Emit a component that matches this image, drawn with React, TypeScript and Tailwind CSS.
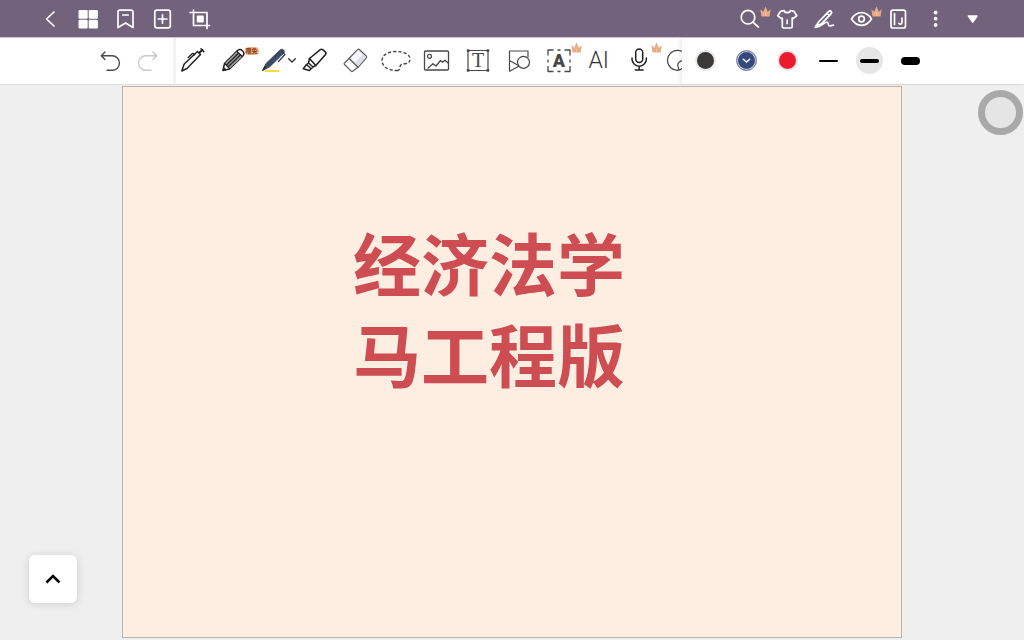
import type { ReactNode } from "react";
import clsx from "clsx";

function Icon({ children, className }: { children: ReactNode; className?: string }) {
  return (
    <svg
      viewBox="0 0 28 28"
      className={clsx("h-7 w-7 shrink-0", className)}
      fill="none"
      stroke="currentColor"
      strokeWidth="1.700"
      strokeLinecap="round"
      strokeLinejoin="round"
      aria-hidden="true"
    >
      {children}
    </svg>
  );
}

function Crown({ className }: { className?: string }) {
  return (
    <svg viewBox="0 0 11 11" className={clsx("absolute h-[11px] w-[11px]", className)} aria-hidden="true">
      <path d="M.3 3.200 3.200 5.800 5.500.4l2.300 5.400 2.900-2.600-1.200 7.200h-8z" fill="#e8ab86" />
      <path d="M5.500 2 6 9.800H5z" fill="#f3c8a8" />
    </svg>
  );
}

function NavButton({ label, children }: { label: string; children: ReactNode }) {
  return (
    <button type="button" aria-label={label} className="relative flex h-full w-[37px] items-center justify-center">
      {children}
    </button>
  );
}

function ToolButton({ label, children }: { label: string; children: ReactNode }) {
  return (
    <button type="button" aria-label={label} className="relative flex h-full items-center justify-center">
      {children}
    </button>
  );
}

function Header() {
  return (
    <header className="flex h-[38px] items-center justify-between border-b border-[#cfc3d6] bg-[#73627c] pr-[33px] pl-8 text-white">
      <nav className="flex h-full">
        <NavButton label="返回">
          <Icon>
            <path d="M17 7 9.500 14 17 21" />
          </Icon>
        </NavButton>
        <NavButton label="缩略图">
          <Icon>
            <g fill="currentColor" stroke="none">
              <rect x="4.500" y="5" width="9.200" height="8.700" rx="1.200" />
              <rect x="14.700" y="5" width="9.200" height="8.700" rx="1.200" />
              <rect x="4.500" y="14.700" width="9.200" height="8.700" rx="1.200" />
              <rect x="14.700" y="14.700" width="9.200" height="8.700" rx="1.200" />
            </g>
          </Icon>
        </NavButton>
        <NavButton label="书签">
          <Icon>
            <path d="M7 22.500V7a1.800 1.800 0 0 1 1.800-1.800H20.200A1.800 1.800 0 0 1 22 7V22.500L14.500 18z" />
            <path d="M11.800 10h5.400" />
          </Icon>
        </NavButton>
        <NavButton label="添加页面">
          <Icon>
            <rect x="6.800" y="5.200" width="15.500" height="17.600" rx="2" />
            <path d="M10.300 14h8.500M14.500 9.800v8.400" />
          </Icon>
        </NavButton>
        <NavButton label="裁剪">
          <Icon>
            <path d="M5 7.500H22v16M8.500 5v15.500H24.500" />
            <rect x="11.800" y="10.600" width="7" height="7" rx=".8" fill="currentColor" stroke="none" />
          </Icon>
        </NavButton>
      </nav>
      <nav className="flex h-full">
        <NavButton label="搜索">
          <Icon>
            <circle cx="11" cy="12.200" r="6.800" />
            <path d="m16 17.200 5.300 4.800" />
          </Icon>
          <Crown className="top-[6px] right-[-2px]" />
        </NavButton>
        <NavButton label="主题">
          <Icon>
            <path d="M10 5.500c.5 2.800 6 2.800 6.500 0l3.400.8 2.900 4.500-3.800 2.800-.8-.6v8.500a1.500 1.500 0 0 1-1.500 1.500H9.800A1.500 1.500 0 0 1 8.300 21.500V13l-.8.6L3.700 10.800l2.900-4.500z" />
            <path d="M13.200 15v3.500" />
          </Icon>
        </NavButton>
        <NavButton label="手写">
          <Icon>
            <path d="M8 16.500 17.800 6.400a1.600 1.600 0 0 1 2.400 2.200L10.400 18.900 5 20.800z" />
            <path d="m16 8.300 2.300 2.200M4 22.300c6-.2 9.500-5.300 12-5.300 2 0 .5 4 2.500 4 1.500 0 2.300-.8 4-.8" />
          </Icon>
        </NavButton>
        <NavButton label="阅读模式">
          <Icon>
            <path d="M3.500 14C6 10 9.500 7.700 13.500 7.700S21 10 23.500 14c-2.500 4-6 6.300-10 6.300S6 18 3.500 14z" />
            <circle cx="13.500" cy="14" r="2.800" />
          </Icon>
          <Crown className="top-[6px] right-[-2px]" />
        </NavButton>
        <NavButton label="文档">
          <Icon>
            <rect x="6" y="5.200" width="14.500" height="17.800" rx="2" />
            <path d="M9.500 8.500v11M17 13v4.500a1.600 1.600 0 0 1-3 .8" />
          </Icon>
        </NavButton>
        <NavButton label="更多">
          <Icon>
            <g fill="currentColor" stroke="none">
              <circle cx="13.600" cy="7.500" r="1.900" />
              <circle cx="13.600" cy="13.700" r="1.900" />
              <circle cx="13.600" cy="20" r="1.900" />
            </g>
          </Icon>
        </NavButton>
        <NavButton label="收起">
          <Icon>
            <path d="M9.500 11h8.400L13.700 17z" fill="currentColor" />
          </Icon>
        </NavButton>
      </nav>
    </header>
  );
}

function Tools() {
  return (
    <div className="grid h-full w-[527px] shrink-0 grid-cols-13">
      <ToolButton label="钢笔">
        <Icon>
          <path d="M2.800 24 5.200 17 18.500 4.500l3 3L8 21.500z" strokeWidth="1.500" />
          <path d="m9.200 10.500 4-3.800q1-.8 1.800.3l.6.700" strokeWidth="1.400" />
          <path d="m20.500 5.500 2.800-2.500" strokeWidth="2" />
          <path d="m22 1.800 2.800 2.800" strokeWidth="1.500" />
        </Icon>
      </ToolButton>
      <ToolButton label="铅笔">
        <Icon>
          <path d="M3 23.500 4.500 16.500 17.500 3.500q2.500-2 5 .3t.5 5L9.500 22z" fill="#fff" strokeWidth="1.500" />
          <path d="M4.800 16.500 17 4.500l5.200 5L9.500 21.700z" fill="#9a9a9a" stroke="none" />
          <path d="M6.300 18.200 18.700 6M8 20 20.600 7.700M17 4.500l5.200 5M4.800 16.500l4.700 5.200" strokeWidth="1.200" />
          <path d="m3.800 20.800-.8 2.700 2.800-.7z" fill="currentColor" strokeWidth="1" />
        </Icon>
        <span className="absolute top-[9px] left-[31px] rounded-sm bg-[#efb184] px-px text-[6px] leading-[8px] font-bold whitespace-nowrap text-[#8b3a12]">
          限免
        </span>
      </ToolButton>
      <ToolButton label="圆珠笔">
        <Icon>
          <path d="M5.500 24h13" stroke="#f6dc3e" strokeWidth="2" />
          <path d="M2.500 23.500 6 16.500 20 3c1.200-1 2.700-1 3.600-.1s.9 2.300-.1 3.400L10 19.500z" fill="#3b4a66" stroke="#2d384f" strokeWidth=".8" />
          <path d="m18.500 14.500 6.500-7-1.500-1.200" stroke="#34383f" strokeWidth="1.200" />
          <path d="m2.300 23.800 2.300-4.600 1.800 1.900z" fill="#23262c" stroke="none" />
        </Icon>
        <svg viewBox="0 0 8 5" className="absolute top-[20px] right-[-1px] h-[5px] w-2" fill="none" stroke="#333" aria-hidden="true">
          <path d="m.7.7 3.300 3.300L7.300.7" strokeWidth="1.300" strokeLinecap="round" />
        </svg>
      </ToolButton>
      <ToolButton label="荧光笔">
        <Icon>
          <path d="M8.500 11.500 19 2.800c1-.8 2-.7 3 .1l2.200 1.900c.9.8 1 1.800.2 2.900L14.800 18.500z" strokeWidth="1.600" />
          <path d="m8.500 11.500-1 4.500 4.500 4 2.800-1.500M7.500 16l-2 1.500-3.200 4.300 6 1.700 3.700-3.500M5.500 17.500l4.300 4" strokeWidth="1.500" />
        </Icon>
      </ToolButton>
      <ToolButton label="橡皮">
        <Icon className="text-[#5b5c62]">
          <path d="M8 11.500 16.500 2.700a1.500 1.500 0 0 1 2.100 0l6.600 6.300a1.500 1.500 0 0 1 0 2.100L17 20.300z" fill="#f7f7fb" strokeWidth="1.200" />
          <path d="m13 16.500 9-9.500 3 3-8 9.800z" fill="#dedfea" stroke="none" />
          <path d="M8 11.500 3.500 16a1 1 0 0 0 0 1.500l6.700 6.700a1 1 0 0 0 1.500 0l5.300-3.900z" fill="#fff" strokeWidth="1.200" />
        </Icon>
      </ToolButton>
      <ToolButton label="套索">
        <svg viewBox="0 0 32 24" className="h-6 w-8 text-[#454545]" fill="none" stroke="currentColor" strokeWidth="1.400" strokeDasharray="3.200 2" aria-hidden="true">
          <path d="M18 21.500C8.500 22 2 17.500 2 11.500 2 6 8 2.500 16 2.500S30 5.500 30 10c0 3-1.500 4.500-4.500 4.700-3.500.2-5.500 1-5.500 3.300 0 1.500-.3 2.800-2 3.500z" />
        </svg>
      </ToolButton>
      <ToolButton label="图片">
        <Icon className="text-[#484848]">
          <rect x="2.500" y="4" width="24" height="19" rx="1" strokeWidth="1.300" />
          <circle cx="7.500" cy="9.300" r="2" strokeWidth="1.200" />
          <path d="m6 21 5-4.300 3 2.300 4.500-5.500 2 1.700 2.500-2 3.200 2.800" strokeWidth="1.300" />
        </Icon>
      </ToolButton>
      <ToolButton label="文本">
        <Icon className="text-[#484848]">
          <rect x="5" y="3.500" width="20" height="20" strokeWidth="1.200" />
          <g fill="currentColor" stroke="none">
            <rect x="3.800" y="2.300" width="2.600" height="2.600" />
            <rect x="23.600" y="2.300" width="2.600" height="2.600" />
            <rect x="3.800" y="22.100" width="2.600" height="2.600" />
            <rect x="23.600" y="22.100" width="2.600" height="2.600" />
            <text x="15" y="20" fontSize="20" textAnchor="middle" fontFamily="'Liberation Serif', serif">T</text>
          </g>
        </Icon>
      </ToolButton>
      <ToolButton label="形状">
        <Icon className="text-[#484848]">
          <path d="M5.500 12.500V4h18.500v6" strokeWidth="1.200" />
          <path d="M5.500 13.500v10.700L15.300 19z" strokeWidth="1.200" fill="#fff" />
          <circle cx="19.500" cy="15.300" r="6" strokeWidth="1.200" fill="#fff" />
        </Icon>
      </ToolButton>
      <ToolButton label="文字识别">
        <Icon className="text-[#484848]">
          <path d="M4 8.500V3h5.500M20.500 3H26V8.500M26 19V24.500h-5.500M9.500 24.500H4v-5.500M13.500 3h3M13.500 24.500h3M4 12.500v3M26 12.500v3" strokeWidth="1.300" strokeLinecap="butt" />
          <text x="15" y="20" fontSize="18" fontWeight="900" textAnchor="middle" fill="currentColor" stroke="none" fontFamily="Roboto, sans-serif">A</text>
        </Icon>
        <Crown className="top-[4px] right-[-4px]" />
      </ToolButton>
      <ToolButton label="AI">
        <span className="font-[Roboto,sans-serif] text-[23px] leading-7 font-light text-[#333]">AI</span>
      </ToolButton>
      <ToolButton label="录音">
        <Icon className="text-[#222]">
          <rect x="10.700" y="2" width="7" height="13.500" rx="3.500" strokeWidth="1.500" />
          <path d="M7 11v1a7.200 7.200 0 0 0 14.400 0v-1M14.200 19.200v3.800M10.300 23h7.800" strokeWidth="1.500" />
        </Icon>
        <Crown className="top-[4px] right-[-3px]" />
      </ToolButton>
      <ToolButton label="贴纸">
        <Icon className="text-[#484848]">
          <path d="M12 23.300A10 10 0 1 1 21.500 13C15 12.500 10.500 16 12 19.500c.7 1.500.7 3 0 3.800zM12 23.300c4-1 8-4.500 9.500-10.300" strokeWidth="1.200" />
        </Icon>
      </ToolButton>
    </div>
  );
}

const widths = [
  { label: "细", bar: "h-[2px] w-[19px]", active: false },
  { label: "中", bar: "h-1 w-[19px]", active: true },
  { label: "粗", bar: "h-2 w-[19px]", active: false },
];

function Toolbar() {
  return (
    <div className="flex h-[47px] items-center border-b border-[#dedede] bg-white text-[#222]">
      <div className="flex h-full shrink-0 pr-[6px] pl-[91px]">
        <button type="button" aria-label="撤销" className="flex w-[38px] items-center justify-center text-[#4a4a4a]">
          <Icon>
            <path d="M9 5 5.300 8.800 9 12.500M5.500 8.800h10.700a7.100 7.100 0 0 1 0 14.500H11" strokeWidth="1.400" />
          </Icon>
        </button>
        <button type="button" aria-label="重做" className="flex w-[38px] items-center justify-center text-[#c8c8c8]">
          <Icon>
            <path d="m19 5 3.700 3.800-3.700 3.700M22.500 8.800H11.800a7.100 7.100 0 0 0 0 14.500H17" strokeWidth="1.400" />
          </Icon>
        </button>
      </div>
      <div className="h-full min-w-0 flex-1 overflow-hidden border-l-3 border-[#f3f3f3]">
        <div className="-ml-[3px] h-full">
          <Tools />
        </div>
      </div>
      <div className="relative flex h-full shrink-0 items-center bg-white pr-[93px] pb-px pl-[3px] shadow-[-3px_0_3px_rgba(0,0,0,0.06)]">
        <button type="button" aria-label="黑色" className="flex w-[41px] justify-center">
          <span className="h-[21px] w-[21px] rounded-full border-2 border-[#e9e9e9] bg-[#3a3938]" />
        </button>
        <button type="button" aria-label="蓝色" className="flex w-[41px] justify-center">
          <span className="flex h-[21px] w-[21px] items-center justify-center rounded-full border border-[#858b98] bg-[#34497e] ring-1 ring-[#d5d8e0] ring-inset">
            <svg viewBox="0 0 9 6" className="h-[6px] w-[9px]" fill="none" stroke="white" aria-hidden="true">
              <path d="m1.300 1.200 3.200 2.800 3.200-2.800" strokeWidth="1.500" strokeLinecap="round" />
            </svg>
          </span>
        </button>
        <button type="button" aria-label="红色" className="flex w-[41px] justify-center">
          <span className="h-[21px] w-[21px] rounded-full border-2 border-[#eee5e6] bg-[#eb1a2f]" />
        </button>
        {widths.map((w) => (
          <button key={w.label} type="button" aria-label={w.label} className="flex w-[41px] justify-center">
            <span className={clsx("flex h-[27px] w-[27px] items-center justify-center rounded-full", w.active && "bg-[#e6e6e6]")}>
              <span className={clsx("rounded-full bg-black", w.bar)} />
            </span>
          </button>
        ))}
      </div>
    </div>
  );
}

export default function App() {
  return (
    <div className="relative flex min-h-screen flex-col bg-[#efefef] font-['Noto_Sans_CJK_SC',sans-serif]">
      <Header />
      <Toolbar />
      <main className="flex-1 px-[122px] pt-px pb-[2px]">
        {/* Note page */}
        <article className="aspect-[780/552] border border-[#bbb3ae] bg-[#feeee1] pt-[129px] pl-[230px]">
          <h1 className="text-[68px] leading-[91px] font-bold text-[#cd4d52]">
            经济法学
            <br />
            马工程版
          </h1>
        </article>
      </main>

      {/* Floating controls */}
      <button
        type="button"
        aria-label="悬浮球"
        className="absolute top-[90px] right-px h-[45px] w-[45px] rounded-full border-[7px] border-[#a9a9a9] bg-[#e5e5e5]"
      />
      <button
        type="button"
        aria-label="展开"
        className="absolute bottom-[37px] left-[29px] flex h-12 w-12 items-center justify-center rounded-md bg-white shadow-[0_1px_8px_rgba(0,0,0,0.14)]"
      >
        <Icon className="text-black">
          <path d="m7.500 17.500 6.500-6.500 6.500 6.500" strokeWidth="2.600" strokeLinecap="butt" strokeLinejoin="miter" />
        </Icon>
      </button>
    </div>
  );
}
